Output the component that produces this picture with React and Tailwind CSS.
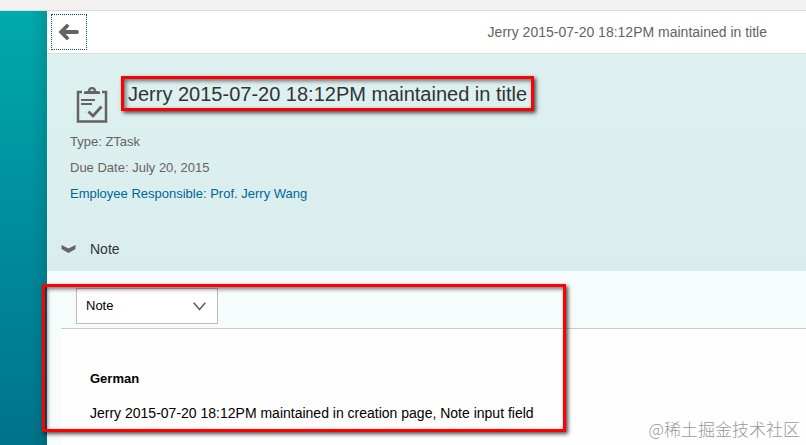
import React from 'react';

const task = {
  title: 'Jerry 2015-07-20 18:12PM maintained in title',
  type: 'ZTask',
  dueDate: 'July 20, 2015',
  responsible: 'Prof. Jerry Wang',
};

const notes = [
  {
    language: 'German',
    text: 'Jerry 2015-07-20 18:12PM maintained in creation page, Note input field',
  },
];

const BackIcon = () => (
  <svg width="20" height="16" viewBox="0 0 20 16" fill="none" aria-hidden="true">
    <path
      d="M8 2 2 8l6 6M2.500 8H18"
      stroke="#666360"
      strokeWidth="3.800"
      strokeLinecap="round"
      strokeLinejoin="round"
    />
  </svg>
);

const TaskIcon = () => (
  <svg width="32" height="36" viewBox="0 0 32 36" fill="none" aria-hidden="true">
    <path d="M6 5H2v29.500h28V5h-4" stroke="#666360" strokeWidth="2.500" />
    <path
      d="M8 7V5.500Q8 4 10 4h2a4 4 0 0 1 8 0h2q2 0 2 1.500V7ZM14.200 4h3.600a1.800 1.800 0 0 0-3.600 0Z"
      fill="#666360"
      fillRule="evenodd"
    />
    <path d="M5 13h14M5 17h11" stroke="#666360" strokeWidth="2" />
    <path d="m12.500 24.500 4.500 4.500L25.500 19.500" stroke="#666360" strokeWidth="2.800" />
  </svg>
);

const Header = ({ title }) => (
  <header className="flex h-[43px] items-center justify-between border-b border-[#dedcda] bg-white pl-1 pr-[39px]">
    <button
      type="button"
      aria-label="Back"
      className="flex size-9 items-center justify-center border border-dotted border-[#004d80]"
    >
      <BackIcon />
    </button>
    <span className="text-sm text-[#666360]">{title}</span>
  </header>
);

const TaskSummary = () => (
  <div className="px-[23px] pt-[22px]">
    <div className="flex items-start">
      <div className="ml-[6px] mt-[11px]">
        <TaskIcon />
      </div>
      <h1 className="ml-[13px] border-3 border-[#ff0000] px-1 pt-px text-[20px] leading-7 text-[#333] shadow-[2px_2px_4px_rgba(0,0,0,0.7),inset_2px_2px_4px_rgba(0,0,0,0.55)]">
        {task.title}
      </h1>
    </div>
    <div className="mt-[6px] text-[13px] leading-[26px] text-[#666360]">
      <p>Type: {task.type}</p>
      <p>Due Date: {task.dueDate}</p>
      <p>
        <a href="#responsible" className="text-[#006699]">
          Employee Responsible: {task.responsible}
        </a>
      </p>
    </div>
  </div>
);

const NotePicker = () => (
  <div className="ml-[14px] border-b border-[#cdcac5] pb-1 pl-[15px] pt-[17px]">
    <div className="relative w-[142px]">
      <select
        aria-label="Note type"
        defaultValue="note"
        className="h-9 w-full appearance-none border border-[#bfbbb5] bg-white px-[9px] text-[13px] text-black"
      >
        <option value="note">Note</option>
      </select>
      <svg
        className="pointer-events-none absolute right-3 top-[14px]"
        width="13"
        height="9"
        viewBox="0 0 13 9"
        fill="none"
        aria-hidden="true"
      >
        <path d="M.7.800 6.500 7.500 12.300.800" stroke="#666360" strokeWidth="1.700" />
      </svg>
    </div>
  </div>
);

const NoteSection = () => (
  <section className="relative flex flex-1 flex-col bg-[#f6fbfc]">
    <NotePicker />
    <div className="ml-[14px] flex-1 bg-[#fefefe] pl-[29px] pt-[37px] text-black">
      {notes.map((note) => (
        <article key={note.language} className="leading-[26px]">
          <h2 className="text-[13px] font-bold">{note.language}</h2>
          <p className="mt-2 text-sm leading-[26px]">{note.text}</p>
        </article>
      ))}
    </div>
    {/* highlight around the note */}
    <div className="pointer-events-none absolute -left-[5px] top-[13px] h-[148px] w-[524px] border-3 border-[#ff0000] shadow-[2px_2px_4px_rgba(0,0,0,0.7),inset_2px_2px_4px_rgba(0,0,0,0.55)]" />
  </section>
);

export default function App() {
  return (
    <div className="relative flex min-h-screen flex-col overflow-hidden bg-white font-['Liberation_Sans',Arial,sans-serif]">
      <div className="h-[11px] border-b border-[#dedcda] bg-[#f2f1ef]" />
      <div className="flex flex-1">
        <aside className="w-[47px] shrink-0 bg-linear-to-b from-[#00a9ac] to-[#00728b]">
          <div className="ml-auto h-full w-4 bg-linear-to-r from-transparent to-black/10" />
        </aside>
        <main className="flex min-w-0 flex-1 flex-col">
          <Header title={task.title} />
          <div className="bg-linear-to-b from-[#ddf1f0] to-[#d9edee]">
            <TaskSummary />
            <button
              type="button"
              aria-expanded="true"
              className="mt-5 flex h-11 w-full items-center gap-[14px] pl-[14px] text-sm text-[#333]"
            >
              <svg width="15" height="8" viewBox="0 0 15 8" aria-hidden="true">
                <path d="M.500 0 7.500 3.500 14.500 0V4L7.500 8 .500 4Z" fill="#666360" />
              </svg>
              Note
            </button>
          </div>
          <NoteSection />
        </main>
      </div>
      <div className="absolute bottom-1 right-[6px] font-['Noto_Sans_CJK_SC',sans-serif] text-[17px] font-light leading-6 text-[#999] [text-shadow:1px_1px_1px_#fff]">
        @稀土掘金技术社区
      </div>
    </div>
  );
}
